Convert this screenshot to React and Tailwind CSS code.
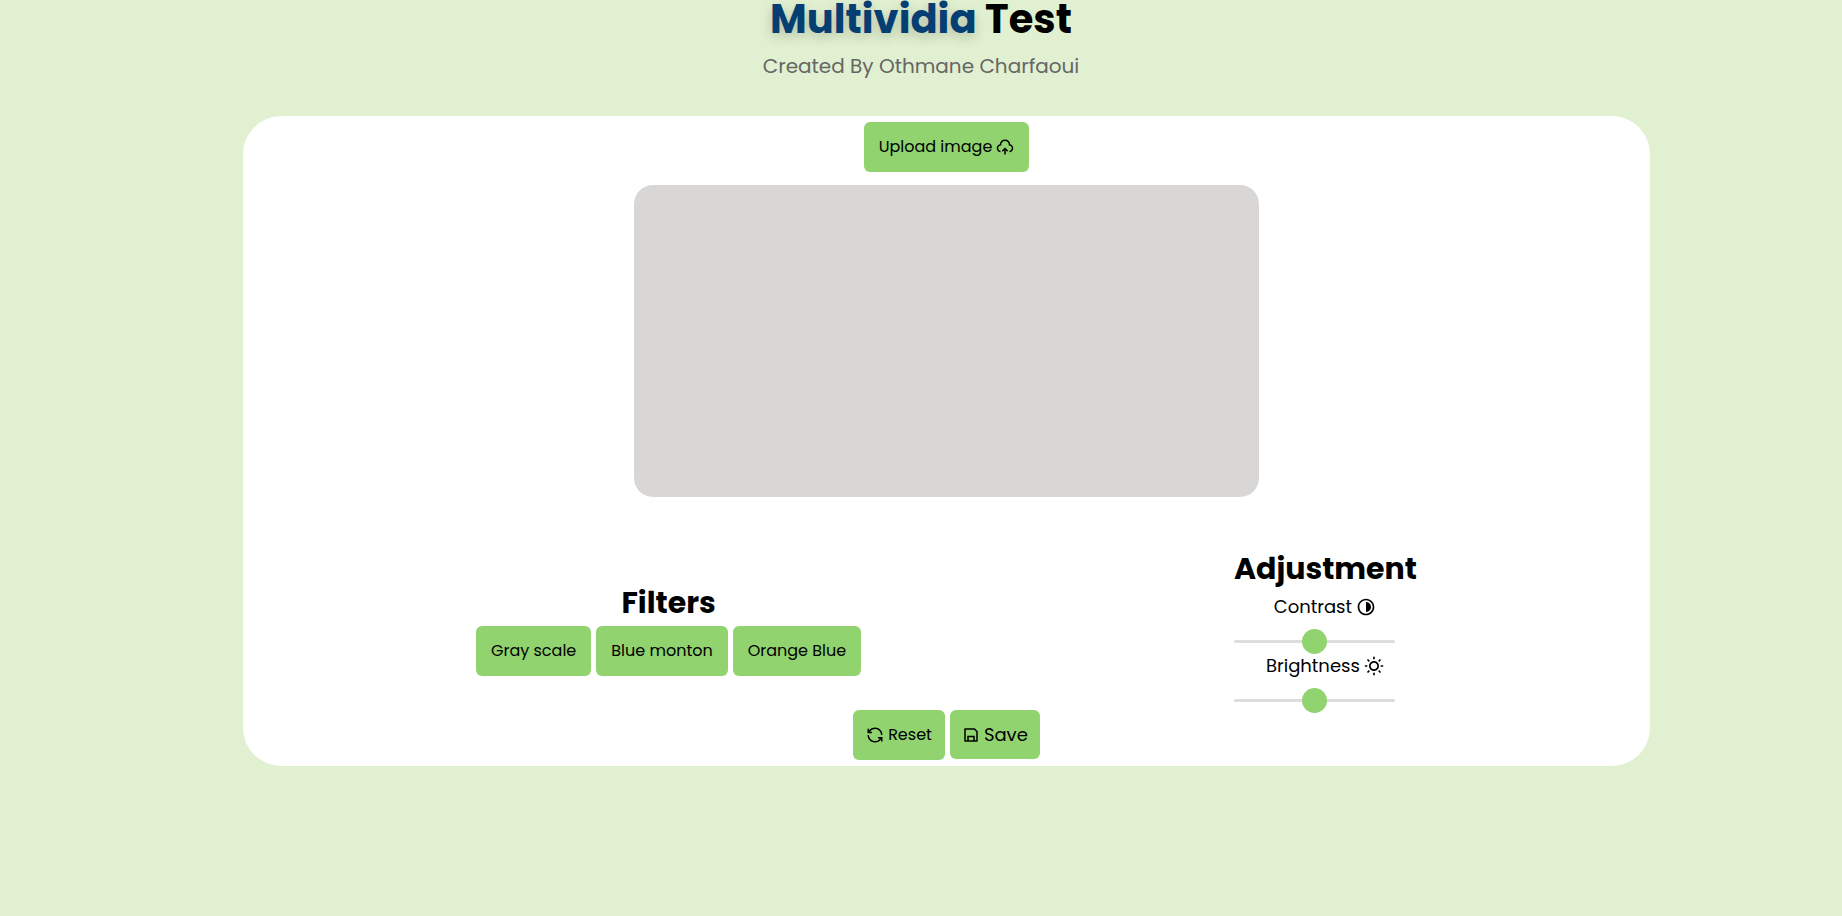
import { RiUploadCloud2Line, RiContrastLine, RiSunLine, RiLoopLeftLine, RiSaveLine } from "react-icons/ri";

const FILTERS = ["Gray scale", "Blue monton", "Orange Blue"];

const BUTTON_SIZES = {
  wide: "h-[50px] px-[15px] text-base",
  compact: "h-[50px] px-[13px] text-base",
  large: "h-[49px] px-3 text-lg",
};

const SLIDER =
  "block h-5 w-[161px] cursor-pointer appearance-none bg-transparent [&::-webkit-slider-runnable-track]:h-[3px] [&::-webkit-slider-runnable-track]:rounded-full [&::-webkit-slider-runnable-track]:bg-[#dddddd] [&::-webkit-slider-thumb]:-mt-[11px] [&::-webkit-slider-thumb]:size-[25px] [&::-webkit-slider-thumb]:appearance-none [&::-webkit-slider-thumb]:rounded-full [&::-webkit-slider-thumb]:bg-[#90d36f]";

function Button({ children, size = "wide" }) {
  return (
    <button
      type="button"
      className={`flex cursor-pointer items-center gap-1 rounded-md bg-[#90d36f] ${BUTTON_SIZES[size]}`}
    >
      {children}
    </button>
  );
}

function Adjuster({ id, label, icon: Icon }) {
  return (
    <div>
      <label htmlFor={id} className="flex h-[39px] items-center justify-center gap-1 pb-[9px] text-lg">
        {label} <Icon className="size-5" />
      </label>
      <input id={id} type="range" min="0" max="200" defaultValue="100" className={SLIDER} />
    </div>
  );
}

export default function App() {
  return (
    <div className="min-h-screen bg-[#e1f0d0] font-[Poppins,sans-serif] text-black">
      <header className="text-center">
        <h1 className="text-[40px] leading-[38px] font-bold">
          <span className="text-[#043e72] [text-shadow:0_4px_12px_rgba(0,0,0,0.2)]">Multividia</span> Test
        </h1>
        <p className="mt-[13px] text-xl leading-[30px] text-[#666666]">Created By Othmane Charfaoui</p>
      </header>

      <main className="mt-[35px] mr-[192px] ml-[243px] flex flex-col items-center rounded-[38px] bg-white py-1.5">
        <Button>
          Upload image <RiUploadCloud2Line className="size-[18px]" />
        </Button>
        <div className="mt-[13px] h-[312px] w-[625px] rounded-[19px] bg-[#d8d7d5]" />

        <div className="mt-[49px] flex w-full justify-between pr-[233px] pl-[233px]">
          <section className="mt-[34px] text-center">
            <h2 className="text-3xl leading-[46px] font-bold">Filters</h2>
            <div className="flex gap-[5px]">
              {FILTERS.map((name) => (
                <Button key={name}>{name}</Button>
              ))}
            </div>
          </section>
          <section>
            <h2 className="text-3xl leading-[46px] font-bold">Adjustment</h2>
            <div className="w-[182px]">
              <Adjuster id="contrast" label="Contrast" icon={RiContrastLine} />
              <Adjuster id="brightness" label="Brightness" icon={RiSunLine} />
            </div>
          </section>
        </div>

        <div className="flex gap-[5px]">
          <Button size="compact">
            <RiLoopLeftLine className="size-[18px]" /> Reset
          </Button>
          <Button size="large">
            <RiSaveLine className="size-[18px]" /> Save
          </Button>
        </div>
      </main>
    </div>
  );
}
